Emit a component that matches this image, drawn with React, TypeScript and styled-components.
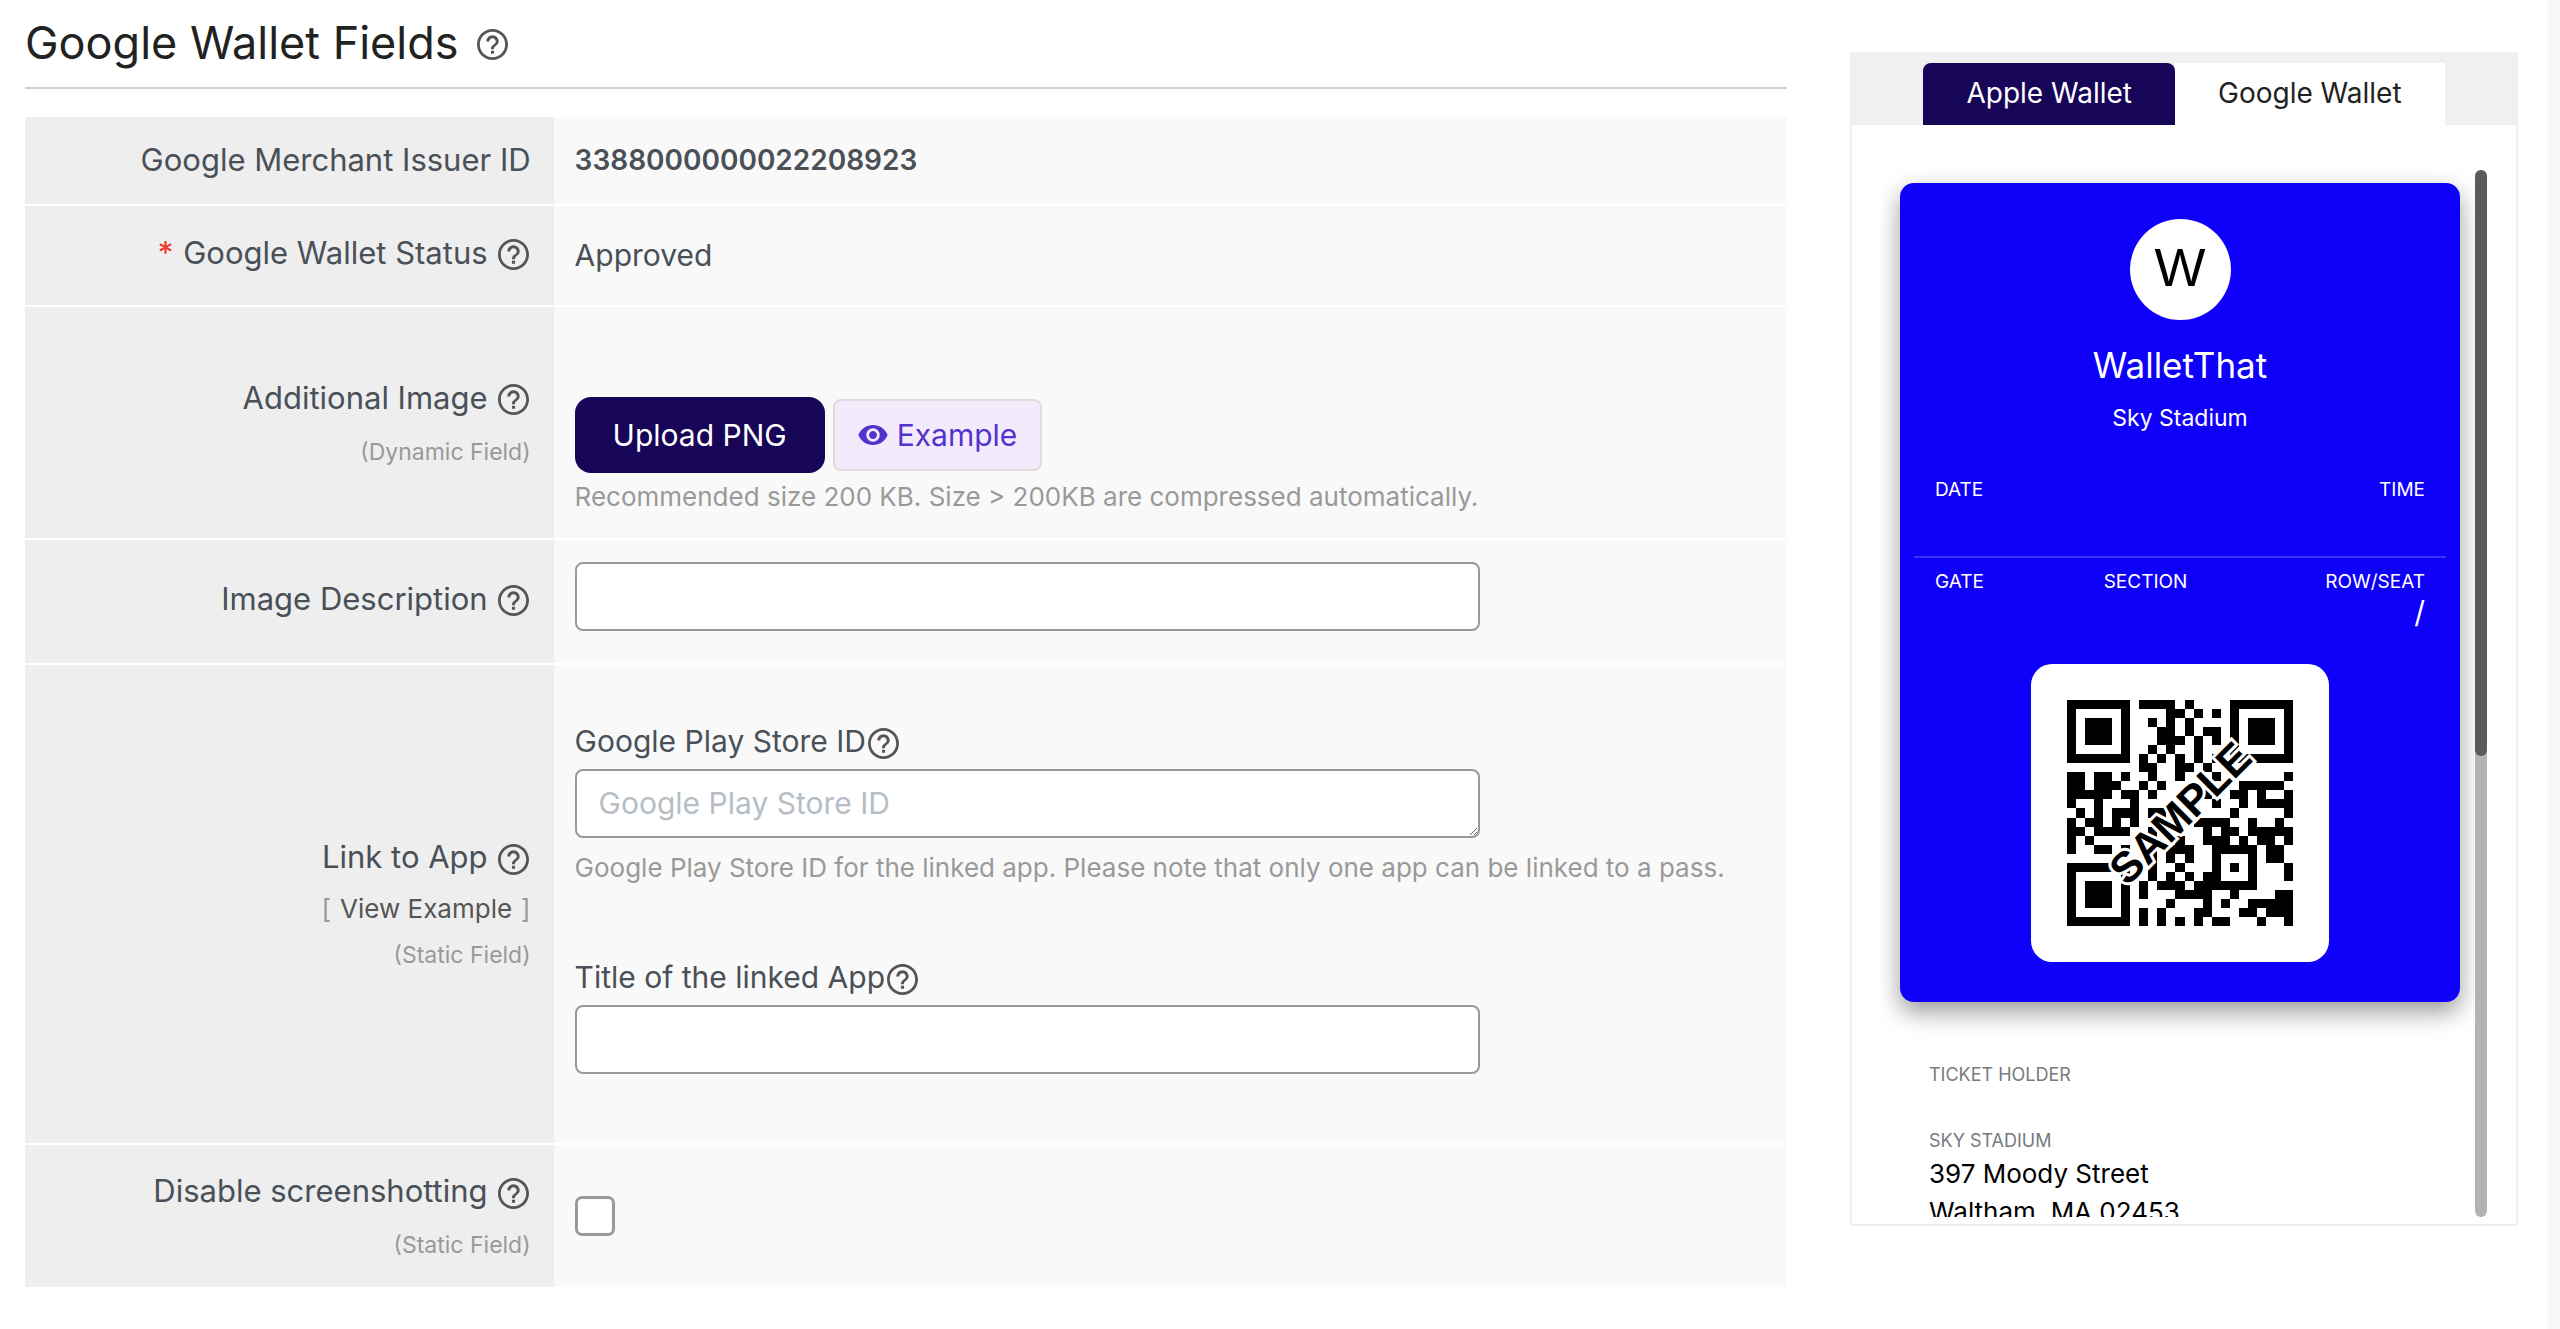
import React, { ReactNode } from "react";
import styled, { createGlobalStyle } from "styled-components";

const color = {
  navy: "#170557",
  violet: "#5333cc",
  lilac: "#f3ebfb",
  pass: "#0f00f9",
  text: "#495057",
  heading: "#222222",
  muted: "#999999",
  icon: "#555555",
  labelBg: "#eeeeee",
  valueBg: "#f9f9f9",
  panel: "#f0f0f0",
};

const GlobalStyle = createGlobalStyle`
  * { box-sizing: border-box; }
  body {
    margin: 0;
    background: #f8f8fa;
    color: ${color.text};
    font-family: Inter, "Liberation Sans", sans-serif;
    font-size: 30px;
  }
  button, input, textarea { font: inherit; }
`;

const Page = styled.div`
  display: grid;
  grid-template-columns: minmax(0, 1fr) 668px;
  column-gap: 63px;
  align-items: start;
  min-height: 100vh;
  margin-right: 12px;
  padding: 0 30px 0 25px;
  background: #fff;
`;

/* ---------- fields ---------- */

const SectionHeader = styled.header`
  display: flex;
  align-items: center;
  gap: 18px;
  margin-bottom: 28px;
  padding: 2px 0 4px;
  border-bottom: 2px solid #cfcfcf;
`;

const SectionTitle = styled.h1`
  margin: 0;
  color: ${color.heading};
  font-size: 45px;
  font-weight: 400;
  line-height: 81px;
`;

const Fields = styled.form`
  display: flex;
  flex-direction: column;
  gap: 2px;
`;

const Row = styled.div`
  display: grid;
  grid-template-columns: 30% minmax(0, 1fr);
`;

const LabelCell = styled.div<{ $raised?: boolean }>`
  display: flex;
  flex-direction: column;
  align-items: flex-end;
  justify-content: center;
  padding: 0 23px ${(p) => (p.$raised ? 6 : 2)}px 0;
  background: ${color.labelBg};
`;

const LabelLine = styled.div`
  display: flex;
  align-items: center;
  gap: 10px;
  font-size: 31px;
  line-height: 60px;
`;

const Required = styled.span`
  color: #f0342b;
`;

const LabelNote = styled.span`
  color: ${color.muted};
  font-size: 23px;
  line-height: 48px;
`;

const ExampleLine = styled.div`
  display: flex;
  gap: 9px;
  color: ${color.muted};
  font-size: 26px;
  line-height: 44px;
`;

const ExampleLink = styled.a`
  color: ${color.icon};
  text-decoration: none;
`;

const ValueCell = styled.div<{ $pad: string }>`
  display: flex;
  flex-direction: column;
  align-items: flex-start;
  justify-content: center;
  padding: ${(p) => p.$pad};
  background: ${color.valueBg};
`;

const IssuerId = styled.output`
  font-size: 28px;
  font-weight: 600;
  line-height: 39px;
`;

const Status = styled.span`
  line-height: 39px;
`;

const HelpButton = styled.button`
  display: flex;
  margin: 4px 2px 0 0;
  padding: 0;
  border: 0;
  background: none;
  color: ${color.icon};
  cursor: pointer;
`;

const Actions = styled.div`
  display: flex;
  align-items: center;
  gap: 8px;
`;

const UploadButton = styled.button`
  height: 76px;
  padding: 0 38px;
  border: 0;
  border-radius: 16px;
  background: ${color.navy};
  color: #fff;
`;

const ExampleButton = styled.button`
  display: flex;
  align-items: center;
  gap: 9px;
  height: 72px;
  padding: 0 23px;
  border: 2px solid #dddddd;
  border-radius: 8px;
  background: ${color.lilac};
  color: ${color.violet};
`;

const Hint = styled.p<{ $gap: number }>`
  margin: ${(p) => p.$gap}px 0 0;
  color: ${color.muted};
  font-size: 26px;
  line-height: 39px;
`;

const FieldLabel = styled.div`
  display: flex;
  align-items: center;
  gap: 2px;
  line-height: 56px;

  p + & {
    margin-top: 62px;
  }
`;

const TextInput = styled.input`
  width: 76%;
  height: 69px;
  padding: 0 22px;
  border: 2px solid ${color.muted};
  border-radius: 8px;
  background: #fff;
  color: ${color.text};
`;

const TextArea = styled.textarea`
  display: block;
  width: 76%;
  height: 69px;
  padding: 14px 22px;
  border: 2px solid ${color.muted};
  border-radius: 8px;
  background: #fff;
  color: ${color.text};
  line-height: 36px;
  resize: vertical;

  &::placeholder {
    color: #b5bec6;
  }
`;

const Checkbox = styled.input`
  appearance: none;
  width: 40px;
  height: 40px;
  margin: 0;
  border: 3px solid ${color.muted};
  border-radius: 7px;
  background: #fff;

  &:checked {
    background: ${color.navy};
  }
`;

/* ---------- preview ---------- */

const Preview = styled.aside`
  margin-top: 52px;
  border: 2px solid ${color.panel};
`;

const Tabs = styled.div`
  display: flex;
  justify-content: center;
  padding-top: 9px;
  background: ${color.panel};
`;

const Tab = styled.button<{ $active?: boolean }>`
  height: 62px;
  padding: 0 43px 2px;
  border: 0;
  border-radius: ${(p) => (p.$active ? "8px 8px 0 0" : "0")};
  background: ${(p) => (p.$active ? color.navy : "#fff")};
  color: ${(p) => (p.$active ? "#fff" : color.heading)};
  font-size: 28px;
`;

const Viewport = styled.div`
  display: flex;
  height: 1099px;
  padding: 43px 29px 7px;
`;

const Scroller = styled.div`
  flex: 1;
  min-width: 0;
  padding: 15px 15px 0 19px;
  overflow: hidden;
`;

const ScrollTrack = styled.div`
  flex: none;
  width: 12px;
  margin-top: 2px;
  border-radius: 6px;
  background: #b3b3b3;
`;

const ScrollThumb = styled.div`
  height: 56%;
  border-radius: 6px;
  background: #5b5b5b;
`;

const Pass = styled.article`
  display: flex;
  flex-direction: column;
  align-items: center;
  padding: 36px 0 40px;
  border-radius: 14px;
  background: ${color.pass};
  color: #fff;
  box-shadow: 0 10px 24px rgba(0, 0, 0, 0.4);
`;

const Logo = styled.div`
  display: flex;
  align-items: center;
  justify-content: center;
  width: 101px;
  height: 101px;
  border-radius: 50%;
  background: #fff;
  color: #000;
  font-family: "Liberation Sans", Arial, sans-serif;
  font-size: 54px;
  line-height: 96px;
  padding-bottom: 5px;
`;

const PassTitle = styled.h2`
  margin: 21px 0 11px;
  font-size: 35px;
  font-weight: 400;
  line-height: 48px;
`;

const Venue = styled.p`
  margin: 0 0 40px;
  font-size: 23px;
  line-height: 36px;
`;

const PassRow = styled.div`
  align-self: stretch;
  display: flex;
  justify-content: space-between;
  padding: 0 35px;
  font-size: 19px;
  line-height: 28px;
`;

const SeatRow = styled(PassRow)`
  display: grid;
  grid-template-columns: repeat(3, 1fr);
  column-gap: 16px;

  & > :last-child {
    text-align: right;
  }
`;

const SeatValue = styled.div`
  font-size: 30px;
  line-height: 32px;
`;

const PassDivider = styled.hr`
  align-self: stretch;
  margin: 52px 14px 10px;
  border: 0;
  border-top: 2px solid rgba(255, 255, 255, 0.2);
`;

const QrBox = styled.div`
  display: flex;
  margin-top: 36px;
  padding: 36px;
  border-radius: 21px;
  background: #fff;
`;

const Details = styled.dl`
  margin: 59px 0 0 29px;
  color: #000;
  font-size: 26px;
  line-height: 38px;
`;

const DetailTerm = styled.dt`
  color: #777a80;
  font-size: 18px;
  line-height: 28px;
`;

const DetailText = styled.dd`
  min-height: 38px;
  margin: 0;
`;

/* ---------- drawings ---------- */

const Help = ({ topic }: { topic: string }) => (
  <HelpButton type="button" aria-label={`Help: ${topic}`}>
    <svg width="31" height="31" viewBox="2 2 20 20" fill="currentColor" aria-hidden="true">
      <path d="M11 18h2v-2h-2v2zm1-16C6.48 2 2 6.48 2 12s4.48 10 10 10 10-4.48 10-10S17.52 2 12 2zm0 18.2c-4.52 0-8.2-3.68-8.2-8.2s3.68-8.2 8.2-8.2 8.2 3.68 8.2 8.2-3.68 8.2-8.2 8.2zM12 6c-2.21 0-4 1.79-4 4h1.9c0-1.1.95-2.1 2.1-2.1s2.1.95 2.1 2.1c0 2-3.1 1.75-3.1 5h1.9c0-2.25 3.1-2.5 3.1-5 0-2.21-1.79-4-4-4z" />
    </svg>
  </HelpButton>
);

const EyeIcon = () => (
  <svg width="30" height="20" viewBox="1 4.5 22 15" fill="currentColor" aria-hidden="true">
    <path d="M12 4.5C7 4.5 2.73 7.61 1 12c1.73 4.39 6 7.5 11 7.5s9.27-3.11 11-7.5c-1.73-4.39-6-7.5-11-7.5zM12 17c-2.76 0-5-2.24-5-5s2.24-5 5-5 5 2.24 5 5-2.24 5-5 5zm0-8c-1.66 0-3 1.34-3 3s1.34 3 3 3 3-1.34 3-3-1.34-3-3-3z" />
  </svg>
);

const QR_MODULES = [
  "1111111011110100001111111",
  "1000001000011010101000001",
  "1011101001010100001011101",
  "1011101000110101101011101",
  "1011101000111010101011101",
  "1000001001010010001000001",
  "1111111010101010101111111",
  "0000000011001101000000000",
  "1101101001001000100000001",
  "1101110010100000000111110",
  "1111101101000001001101001",
  "1001000100000000100101111",
  "0101011101100000001000001",
  "1011010100000011110010010",
  "1101111001000001011011111",
  "1010000001001001110101101",
  "1001101001011100111110110",
  "0000000001010100100010110",
  "1111111001001000101010001",
  "1000001001010101100010001",
  "1011101010111011111110000",
  "1011101010001111001000011",
  "1011101000010001010011111",
  "1000001010100011000110111",
  "1111111010101010110001001",
];

const qrPath = QR_MODULES.map((line, y) =>
  [...line].map((m, x) => (m === "1" ? `M${x} ${y}h1v1h-1z` : "")).join("")
).join("");

const QrCode = () => (
  <svg width="226" height="226" viewBox="0 0 226 226" role="img" aria-label="Sample QR code">
    <path d={qrPath} transform="scale(9.04)" shapeRendering="crispEdges" />
    <text
      x="113"
      y="128"
      transform="rotate(-45 113 113)"
      textAnchor="middle"
      fontFamily="Liberation Sans, Arial, sans-serif"
      fontSize="43"
      fontWeight="700"
      stroke="#fff"
      strokeWidth="6"
      paintOrder="stroke"
    >
      SAMPLE
    </text>
  </svg>
);

/* ---------- page ---------- */

interface FieldRowProps {
  label: string;
  htmlFor?: string;
  required?: boolean;
  help?: boolean;
  link?: string;
  note?: string;
  pad: string;
  children: ReactNode;
}

const FieldRow = ({ label, htmlFor, required, help = true, link, note, pad, children }: FieldRowProps) => (
  <Row>
    <LabelCell $raised={help && !note}>
      <LabelLine>
        {required && <Required>*</Required>}
        {htmlFor ? <label htmlFor={htmlFor}>{label}</label> : <span>{label}</span>}
        {help && <Help topic={label} />}
      </LabelLine>
      {link && (
        <ExampleLine>
          <span>[</span>
          <ExampleLink href="#example">{link}</ExampleLink>
          <span>]</span>
        </ExampleLine>
      )}
      {note && <LabelNote>{note}</LabelNote>}
    </LabelCell>
    <ValueCell $pad={pad}>{children}</ValueCell>
  </Row>
);

export default function App() {
  return (
    <>
      <GlobalStyle />
      <Page>
        <main>
          <SectionHeader>
            <SectionTitle>Google Wallet Fields</SectionTitle>
            <Help topic="Google Wallet Fields" />
          </SectionHeader>
          <Fields>
            <FieldRow label="Google Merchant Issuer ID" htmlFor="issuer" help={false} pad="24px 21px">
              <IssuerId id="issuer">3388000000022208923</IssuerId>
            </FieldRow>
            <FieldRow label="Google Wallet Status" required pad="30px 21px">
              <Status>Approved</Status>
            </FieldRow>
            <FieldRow label="Additional Image" note="(Dynamic Field)" pad="90px 21px 22px">
              <Actions>
                <UploadButton type="button">Upload PNG</UploadButton>
                <ExampleButton type="button">
                  <EyeIcon />
                  Example
                </ExampleButton>
              </Actions>
              <Hint $gap={4}>Recommended size 200 KB. Size &gt; 200KB are compressed automatically.</Hint>
            </FieldRow>
            <FieldRow label="Image Description" htmlFor="description" pad="22px 21px 32px">
              <TextInput id="description" type="text" />
            </FieldRow>
            <FieldRow label="Link to App" link="View Example" note="(Static Field)" pad="48px 21px 69px">
              <FieldLabel>
                <label htmlFor="store-id">Google Play Store ID</label>
                <Help topic="Google Play Store ID" />
              </FieldLabel>
              <TextArea id="store-id" rows={1} placeholder="Google Play Store ID" />
              <Hint $gap={10}>
                Google Play Store ID for the linked app. Please note that only one app can be linked to a pass.
              </Hint>
              <FieldLabel>
                <label htmlFor="app-title">Title of the linked App</label>
                <Help topic="Title of the linked App" />
              </FieldLabel>
              <TextInput id="app-title" type="text" />
            </FieldRow>
            <FieldRow label="Disable screenshotting" htmlFor="screenshots" note="(Static Field)" pad="51px 21px">
              <Checkbox id="screenshots" type="checkbox" />
            </FieldRow>
          </Fields>
        </main>

        <Preview>
          <Tabs role="tablist">
            <Tab type="button" role="tab" aria-selected="true" $active>
              Apple Wallet
            </Tab>
            <Tab type="button" role="tab" aria-selected="false">
              Google Wallet
            </Tab>
          </Tabs>
          <Viewport>
            <Scroller>
              <Pass>
                <Logo>W</Logo>
                <PassTitle>WalletThat</PassTitle>
                <Venue>Sky Stadium</Venue>
                <PassRow>
                  <span>DATE</span>
                  <span>TIME</span>
                </PassRow>
                <PassDivider />
                <SeatRow>
                  <div>GATE</div>
                  <div>SECTION</div>
                  <div>
                    ROW/SEAT
                    <SeatValue>/</SeatValue>
                  </div>
                </SeatRow>
                <QrBox>
                  <QrCode />
                </QrBox>
              </Pass>
              <Details>
                <DetailTerm>TICKET HOLDER</DetailTerm>
                <DetailText />
                <DetailTerm>SKY STADIUM</DetailTerm>
                <DetailText>
                  397 Moody Street
                  <br />
                  Waltham, MA 02453
                </DetailText>
              </Details>
            </Scroller>
            <ScrollTrack>
              <ScrollThumb />
            </ScrollTrack>
          </Viewport>
        </Preview>
      </Page>
    </>
  );
}
